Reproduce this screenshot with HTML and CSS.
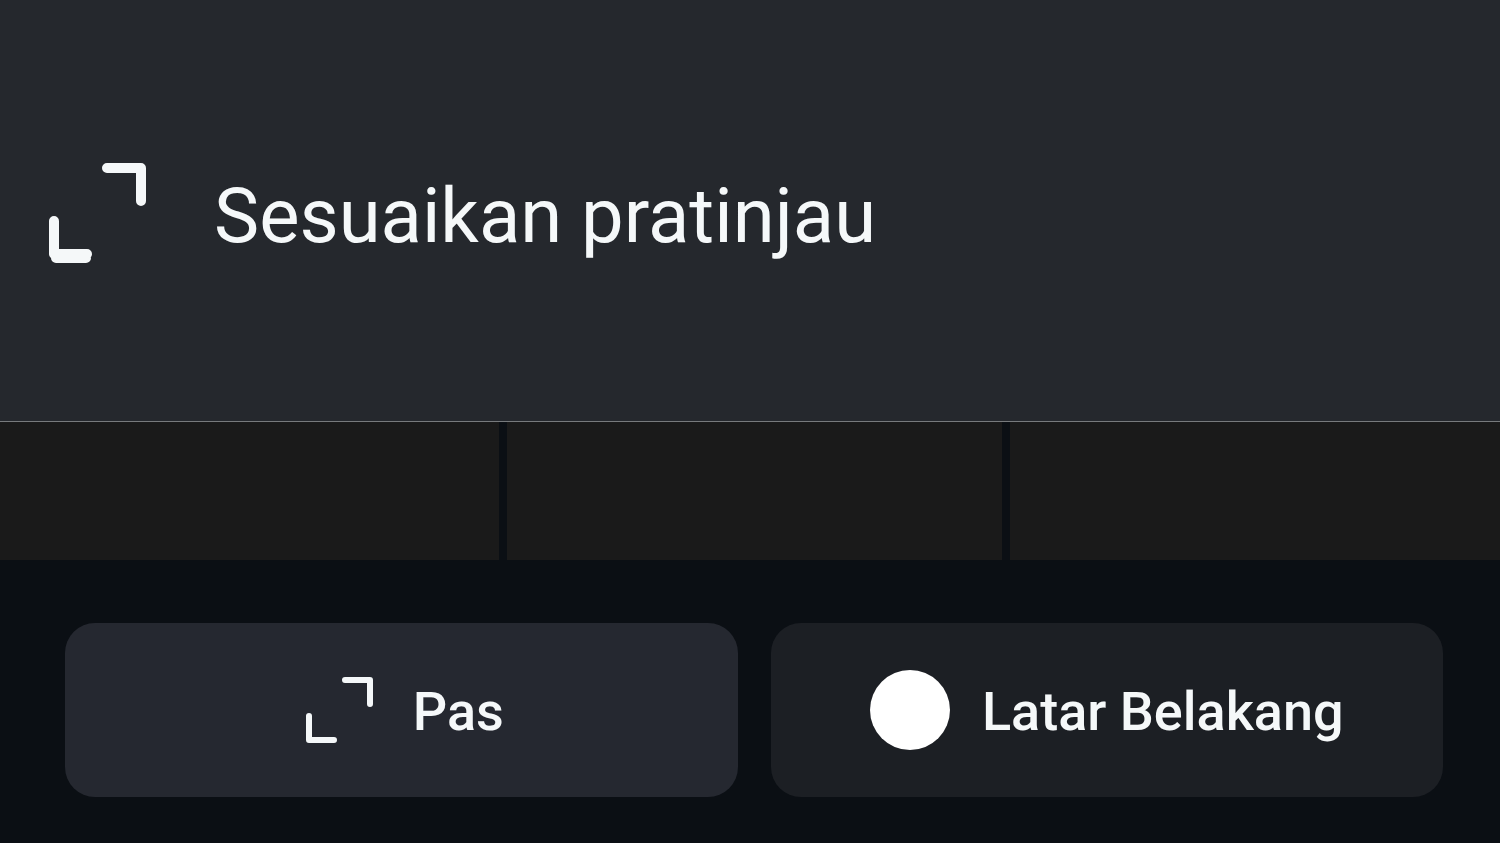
FILE: index.html
```html
<!DOCTYPE html>
<html lang="id">
<head>
<meta charset="utf-8">
<meta name="viewport" content="width=device-width, initial-scale=1">
<title>Sesuaikan pratinjau</title>
<link rel="stylesheet" href="styles.css">
</head>
<body>
<main class="screen">
  <header class="panel">
    <svg class="panel-icon" viewBox="0 0 100 100" fill="none" stroke="currentColor" stroke-linecap="round" stroke-linejoin="round" aria-hidden="true">
      <path d="M59 5H93V38" stroke-width="10"/>
      <path d="M6 58V91H39M8 95H38" stroke-width="10"/>
    </svg>
    <h1 class="panel-title">Sesuaikan pratinjau</h1>
  </header>
  <div class="tiles">
    <div class="tile"></div>
    <div class="tile"></div>
    <div class="tile"></div>
  </div>
  <div class="actions">
    <button class="action action-fit" type="button">
      <svg class="fit-icon" viewBox="0 0 68 68" fill="none" stroke="currentColor" stroke-width="6" stroke-linecap="round" stroke-linejoin="round" aria-hidden="true">
        <path d="M40 4H65V28M4 40V64H29"/>
      </svg>
      <span class="action-label">Pas</span>
    </button>
    <button class="action action-background" type="button">
      <span class="swatch"></span>
      <span class="action-label">Latar Belakang</span>
    </button>
  </div>
</main>
</body>
</html>
```
FILE: styles.css
```css
* {
  box-sizing: border-box;
}

body {
  margin: 0;
  background: #0b0f14;
  color: #f5f8f9;
  font-family: Roboto, "Liberation Sans", sans-serif;
}

.screen {
  display: flex;
  flex-direction: column;
  min-height: 100vh;
}

.panel {
  display: flex;
  flex: 1;
  align-items: center;
  gap: 66px;
  padding: 4px 48px 0;
  background: #25282d;
  border-bottom: 1px solid #777a7d;
}

.panel-icon {
  flex: none;
  width: 100px;
  height: 100px;
}

.panel-title {
  margin: 0;
  padding-top: 6px;
  font-size: 76px;
  font-weight: 400;
  line-height: 92px;
}

.tiles {
  display: grid;
  grid-template-columns: 499fr 495fr 490fr;
  gap: 8px;
}

.tile {
  height: 138px;
  background: #1a1a1a;
}

.actions {
  display: grid;
  grid-template-columns: 1fr 1fr;
  gap: 33px;
  padding: 63px 57px 46px 65px;
}

.action {
  display: flex;
  align-items: center;
  justify-content: center;
  height: 174px;
  padding: 0;
  border: 0;
  border-radius: 30px;
  color: inherit;
  font-family: inherit;
  font-size: 54px;
  font-weight: 500;
  line-height: 64px;
}

.action-label {
  padding-top: 4px;
}

.action-fit {
  gap: 40px;
  padding-left: 6px;
  background: #252830;
}

.action-background {
  gap: 32px;
  background: #1c1f24;
}

.fit-icon {
  width: 68px;
  height: 68px;
}

.swatch {
  width: 80px;
  height: 80px;
  border-radius: 50%;
  background: #fff;
}
```
